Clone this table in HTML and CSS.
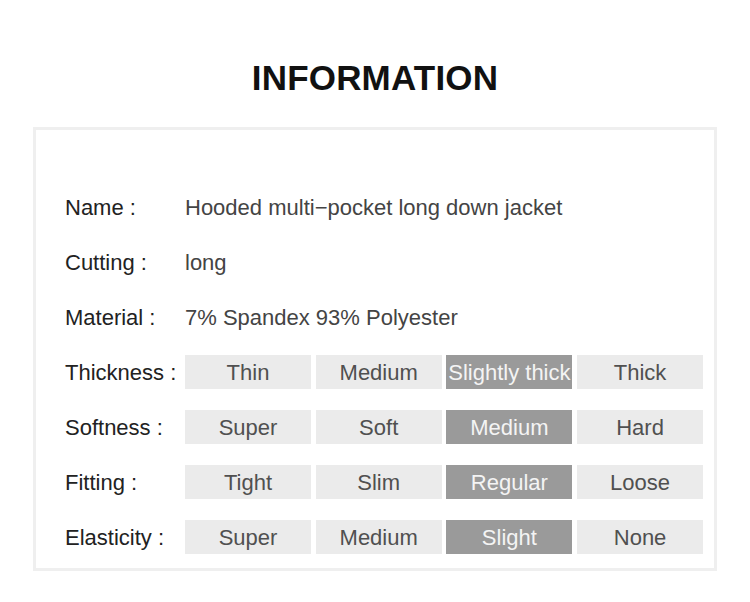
FILE: index.html
```html
<!DOCTYPE html>
<html lang="en">
<head>
<meta charset="utf-8">
<title>Information</title>
<link rel="stylesheet" href="styles.css">
</head>
<body>
<main class="page">
  <h1 class="title">INFORMATION</h1>
  <section class="card">
    <div class="row"><span class="label">Name :</span><span class="value">Hooded multi&minus;pocket long down jacket</span></div>
    <div class="row"><span class="label">Cutting :</span><span class="value">long</span></div>
    <div class="row"><span class="label">Material :</span><span class="value">7% Spandex 93% Polyester</span></div>
    <div class="row"><span class="label">Thickness :</span>
      <div class="cells"><span class="cell">Thin</span><span class="cell">Medium</span><span class="cell on">Slightly thick</span><span class="cell">Thick</span></div>
    </div>
    <div class="row"><span class="label">Softness :</span>
      <div class="cells"><span class="cell">Super</span><span class="cell">Soft</span><span class="cell on">Medium</span><span class="cell">Hard</span></div>
    </div>
    <div class="row"><span class="label">Fitting :</span>
      <div class="cells"><span class="cell">Tight</span><span class="cell">Slim</span><span class="cell on">Regular</span><span class="cell">Loose</span></div>
    </div>
    <div class="row"><span class="label">Elasticity :</span>
      <div class="cells"><span class="cell">Super</span><span class="cell">Medium</span><span class="cell on">Slight</span><span class="cell">None</span></div>
    </div>
  </section>
</main>
</body>
</html>
```

FILE: styles.css
```css
* { box-sizing: border-box; }
html, body { margin: 0; padding: 0; background: #fff; }
body {
  font-family: "Liberation Sans", Arial, Helvetica, sans-serif;
  width: 750px;
  height: 602px;
  overflow: hidden;
}
.page {
  padding-top: 60px;
}
.title {
  margin: 0;
  font-size: 35px;
  line-height: 35px;
  font-weight: 700;
  text-align: center;
  color: #111;
  letter-spacing: 0.2px;
}
.card {
  margin: 32px 0 0 33px;
  width: 684px;
  height: 444px;
  border: 3px solid #efefef;
  padding: 60px 0 0 29px;
  display: flex;
  flex-direction: column;
  gap: 21px;
}
.row {
  display: flex;
  align-items: center;
  height: 34px;
  font-size: 22px;
  line-height: 34px;
}
.label {
  width: 120px;
  flex: none;
  color: #222;
  padding-top: 2px;
}
.value {
  color: #444;
  padding-top: 2px;
}
.cells {
  display: grid;
  grid-template-columns: repeat(4, 126px);
  column-gap: 4.7px;
}
.cell {
  height: 34px;
  padding-top: 1px;
  line-height: 33px;
  background: #ebebeb;
  color: #505050;
  text-align: center;
  white-space: nowrap;
}
.cell.on {
  background: #9a9a9a;
  color: #f4f4f4;
}
```
